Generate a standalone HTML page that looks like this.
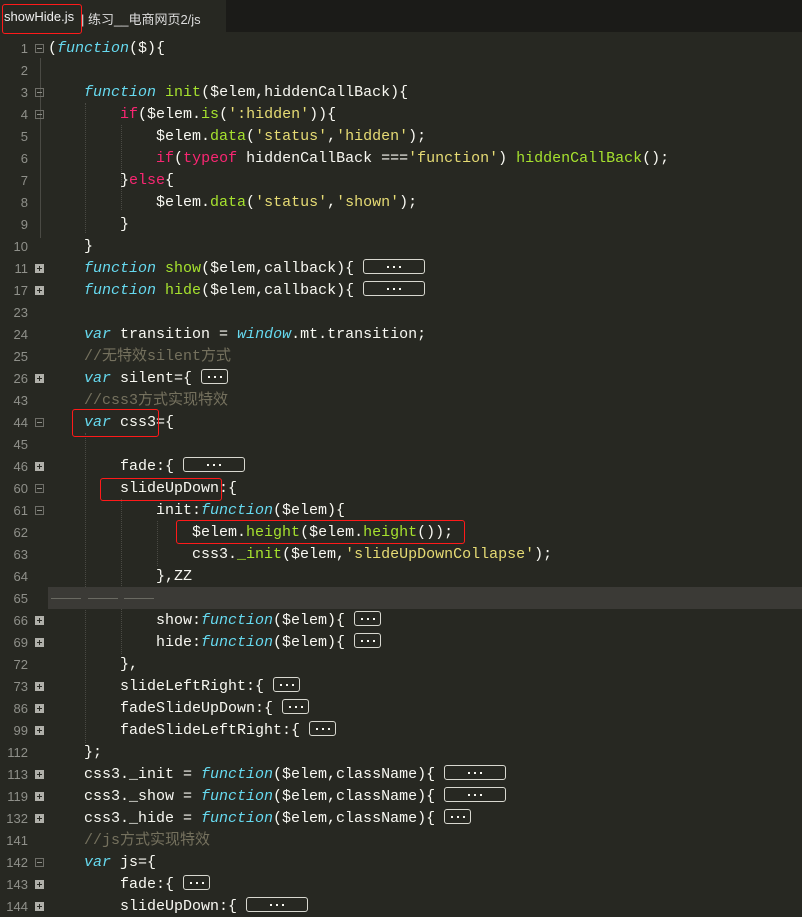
<!DOCTYPE html>
<html><head><meta charset="utf-8"><style>
body{margin:0;width:802px;height:903px;background:#272822;overflow:hidden;position:relative;font-family:"Liberation Mono",monospace;}
.tabbar{position:absolute;left:0;top:0;width:802px;height:32px;background:#272822}
.tabbar .rest{position:absolute;left:226px;top:0;right:0;height:32px;background:#1b1b18}
.tab{position:absolute;top:9px;font:13px "Liberation Sans","Noto Sans CJK SC",sans-serif;color:#f0f0f0;white-space:nowrap}
.row{position:absolute;left:0;height:22px;width:802px}
.ln{position:absolute;right:774px;top:4px;font:13px "Liberation Sans",sans-serif;color:#8f908a;text-align:right}
.fm{position:absolute;left:35px;top:7px;width:9px;height:9px;border:1px solid #6f6f69;box-sizing:border-box}
.fm:after{content:"";position:absolute;left:1px;top:3px;width:5px;height:1px;background:#8f908a}
.fp{position:absolute;left:35px;top:7px;width:9px;height:9px;background:#b0b0aa}
.fp:before{content:"";position:absolute;left:2px;top:4px;width:5px;height:1px;background:#272822}
.fp:after{content:"";position:absolute;left:4px;top:2px;width:1px;height:5px;background:#272822}
.code{position:absolute;left:48px;top:2px;font-size:15px;line-height:20px;color:#f8f8f2;white-space:pre;font-family:"Liberation Mono","Noto Sans CJK SC",monospace}
.k{color:#66d9ef;font-style:italic}.r{color:#f92672}.g{color:#a6e22e}.s{color:#e6db74}.c{color:#75715e}
.box{display:inline-block;vertical-align:middle;height:15px;border:1px solid #d8d8d0;border-radius:3px;position:relative;margin-top:-3px;box-sizing:border-box}
.box:after{content:"";position:absolute;left:50%;top:6px;width:2px;height:2px;margin-left:-1px;background:#f8f8f2;box-shadow:-6px 0 #f8f8f2,6px 0 #f8f8f2}
.w{width:62px}.n{width:27px}
.red{position:absolute;border:1px solid #ff1a1a;border-radius:3px}
.guide{position:absolute;width:0;border-left:1px dotted #4a4a44}
</style></head><body>
<div class="tabbar"><div class="rest"></div>
<div class="tab" style="left:4px">showHide.js</div>
<div class="tab" style="left:81px;color:#ddd">| 练习__电商网页2/js</div></div>
<div class="red" style="left:2px;top:4px;width:78px;height:28px"></div>

<div class="guide" style="left:40px;top:58px;height:180px;border-left:1px solid #4a4a44"></div>
<div class="guide" style="left:85px;top:103px;height:130px"></div>
<div class="guide" style="left:121px;top:125px;height:85px"></div>
<div class="guide" style="left:85px;top:433px;height:310px"></div>
<div class="guide" style="left:121px;top:499px;height:155px"></div>
<div class="guide" style="left:157px;top:521px;height:45px"></div>

<div class="row" style="top:37px"><span class="ln">1</span><span class="fm"></span><span class="code">(<span class="k">function</span>($){</span></div>
<div class="row" style="top:59px"><span class="ln">2</span></div>
<div class="row" style="top:81px"><span class="ln">3</span><span class="fm"></span><span class="code">    <span class="k">function</span> <span class="g">init</span>($elem,hiddenCallBack){</span></div>
<div class="row" style="top:103px"><span class="ln">4</span><span class="fm"></span><span class="code">        <span class="r">if</span>($elem.<span class="g">is</span>(<span class="s">':hidden'</span>)){</span></div>
<div class="row" style="top:125px"><span class="ln">5</span><span class="code">            $elem.<span class="g">data</span>(<span class="s">'status'</span>,<span class="s">'hidden'</span>);</span></div>
<div class="row" style="top:147px"><span class="ln">6</span><span class="code">            <span class="r">if</span>(<span class="r">typeof</span> hiddenCallBack ===<span class="s">'function'</span>) <span class="g">hiddenCallBack</span>();</span></div>
<div class="row" style="top:169px"><span class="ln">7</span><span class="code">        }<span class="r">else</span>{</span></div>
<div class="row" style="top:191px"><span class="ln">8</span><span class="code">            $elem.<span class="g">data</span>(<span class="s">'status'</span>,<span class="s">'shown'</span>);</span></div>
<div class="row" style="top:213px"><span class="ln">9</span><span class="code">        }</span></div>
<div class="row" style="top:235px"><span class="ln">10</span><span class="code">    }</span></div>
<div class="row" style="top:257px"><span class="ln">11</span><span class="fp"></span><span class="code">    <span class="k">function</span> <span class="g">show</span>($elem,callback){ <span class="box w"></span></span></div>
<div class="row" style="top:279px"><span class="ln">17</span><span class="fp"></span><span class="code">    <span class="k">function</span> <span class="g">hide</span>($elem,callback){ <span class="box w"></span></span></div>
<div class="row" style="top:301px"><span class="ln">23</span></div>
<div class="row" style="top:323px"><span class="ln">24</span><span class="code">    <span class="k">var</span> transition = <span class="k">window</span>.mt.transition;</span></div>
<div class="row" style="top:345px"><span class="ln">25</span><span class="code">    <span class="c">//无特效silent方式</span></span></div>
<div class="row" style="top:367px"><span class="ln">26</span><span class="fp"></span><span class="code">    <span class="k">var</span> silent={ <span class="box n"></span></span></div>
<div class="row" style="top:389px"><span class="ln">43</span><span class="code">    <span class="c">//css3方式实现特效</span></span></div>
<div class="row" style="top:411px"><span class="ln">44</span><span class="fm"></span><span class="code">    <span class="k">var</span> css3={</span></div>
<div class="row" style="top:433px"><span class="ln">45</span></div>
<div class="row" style="top:455px"><span class="ln">46</span><span class="fp"></span><span class="code">        fade:{ <span class="box w"></span></span></div>
<div class="row" style="top:477px"><span class="ln">60</span><span class="fm"></span><span class="code">        slideUpDown:{</span></div>
<div class="row" style="top:499px"><span class="ln">61</span><span class="fm"></span><span class="code">            init:<span class="k">function</span>($elem){</span></div>
<div class="row" style="top:521px"><span class="ln">62</span><span class="code">                $elem.<span class="g">height</span>($elem.<span class="g">height</span>());</span></div>
<div class="row" style="top:543px"><span class="ln">63</span><span class="code">                css3.<span class="g">_init</span>($elem,<span class="s">'slideUpDownCollapse'</span>);</span></div>
<div class="row" style="top:565px"><span class="ln">64</span><span class="code">            },ZZ</span></div>
<div class="row" style="top:587px"><div style="position:absolute;left:48px;right:0;top:0;height:22px;background:#3b3a36"></div><div style="position:absolute;left:51px;top:11px;width:30px;border-top:1px solid #6a6a62"></div><div style="position:absolute;left:88px;top:11px;width:30px;border-top:1px solid #6a6a62"></div><div style="position:absolute;left:124px;top:11px;width:30px;border-top:1px solid #6a6a62"></div><span class="ln">65</span></div>
<div class="row" style="top:609px"><span class="ln">66</span><span class="fp"></span><span class="code">            show:<span class="k">function</span>($elem){ <span class="box n"></span></span></div>
<div class="row" style="top:631px"><span class="ln">69</span><span class="fp"></span><span class="code">            hide:<span class="k">function</span>($elem){ <span class="box n"></span></span></div>
<div class="row" style="top:653px"><span class="ln">72</span><span class="code">        },</span></div>
<div class="row" style="top:675px"><span class="ln">73</span><span class="fp"></span><span class="code">        slideLeftRight:{ <span class="box n"></span></span></div>
<div class="row" style="top:697px"><span class="ln">86</span><span class="fp"></span><span class="code">        fadeSlideUpDown:{ <span class="box n"></span></span></div>
<div class="row" style="top:719px"><span class="ln">99</span><span class="fp"></span><span class="code">        fadeSlideLeftRight:{ <span class="box n"></span></span></div>
<div class="row" style="top:741px"><span class="ln">112</span><span class="code">    };</span></div>
<div class="row" style="top:763px"><span class="ln">113</span><span class="fp"></span><span class="code">    css3._init = <span class="k">function</span>($elem,className){ <span class="box w"></span></span></div>
<div class="row" style="top:785px"><span class="ln">119</span><span class="fp"></span><span class="code">    css3._show = <span class="k">function</span>($elem,className){ <span class="box w"></span></span></div>
<div class="row" style="top:807px"><span class="ln">132</span><span class="fp"></span><span class="code">    css3._hide = <span class="k">function</span>($elem,className){ <span class="box n"></span></span></div>
<div class="row" style="top:829px"><span class="ln">141</span><span class="code">    <span class="c">//js方式实现特效</span></span></div>
<div class="row" style="top:851px"><span class="ln">142</span><span class="fm"></span><span class="code">    <span class="k">var</span> js={</span></div>
<div class="row" style="top:873px"><span class="ln">143</span><span class="fp"></span><span class="code">        fade:{ <span class="box n"></span></span></div>
<div class="row" style="top:895px"><span class="ln">144</span><span class="fp"></span><span class="code">        slideUpDown:{ <span class="box w"></span></span></div>

<div class="red" style="left:72px;top:409px;width:85px;height:26px"></div>
<div class="red" style="left:100px;top:478px;width:120px;height:21px"></div>
<div class="red" style="left:176px;top:520px;width:287px;height:22px"></div>
</body></html>
